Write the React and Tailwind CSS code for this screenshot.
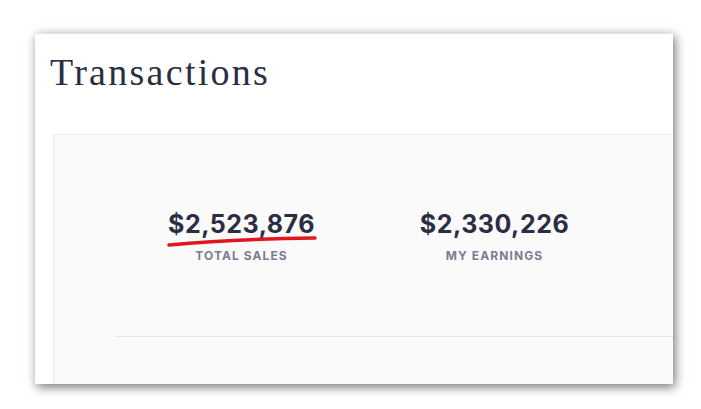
function Stat({ value, label, mark }) {
    return (
        <div className="relative w-[253px] text-center">
            <div className="text-[25px] leading-[30px] font-bold tracking-[0.5px] text-[#2b2e42]" style={{ fontFamily: "Inter, sans-serif" }}>
                {value}
            </div>
            {mark && (
                <svg className="absolute left-[50px] top-[24px]" width="156" height="16" viewBox="0 0 156 16">
                    <path d="M4 12 Q70 6 150 5" fill="none" stroke="#e1161f" strokeWidth="3.5" strokeLinecap="round" />
                </svg>
            )}
            <div className="mt-[9px] text-[12px] leading-4 font-bold tracking-[0.09em] uppercase text-[#7b7e8f]" style={{ fontFamily: "Inter, sans-serif" }}>
                {label}
            </div>
        </div>
    );
}

export default function App() {
    return (
        <div className="w-[701px] h-[409px] bg-white pt-[33px] pl-[35px] overflow-hidden">
            <div className="w-[638px] h-[351px] bg-white overflow-hidden border-t border-[#e4e4e4] shadow-[2px_3px_10px_rgba(0,0,0,0.55)]">
                {/* HEADING */}
                <h1 className="pt-[19px] pl-[15px] text-[38px] leading-[38px] tracking-[0.06em] text-[#2b2e42]" style={{ fontFamily: '"Liberation Serif", serif' }}>
                    Transactions
                </h1>

                {/* CARD */}
                <div className="mt-[43px] ml-[18px] w-[700px] h-[300px] bg-[#fafafa] border border-[#ececec] rounded-[3px] pt-[74px]">
                    <div className="flex pl-[61px]">
                        <Stat value="$2,523,876" label="Total Sales" mark />
                        <Stat value="$2,330,226" label="My Earnings" />
                    </div>
                    <div className="mt-[72px] ml-[61px] h-px bg-[#e3e3e9]" />
                </div>
            </div>
        </div>
    );
}
